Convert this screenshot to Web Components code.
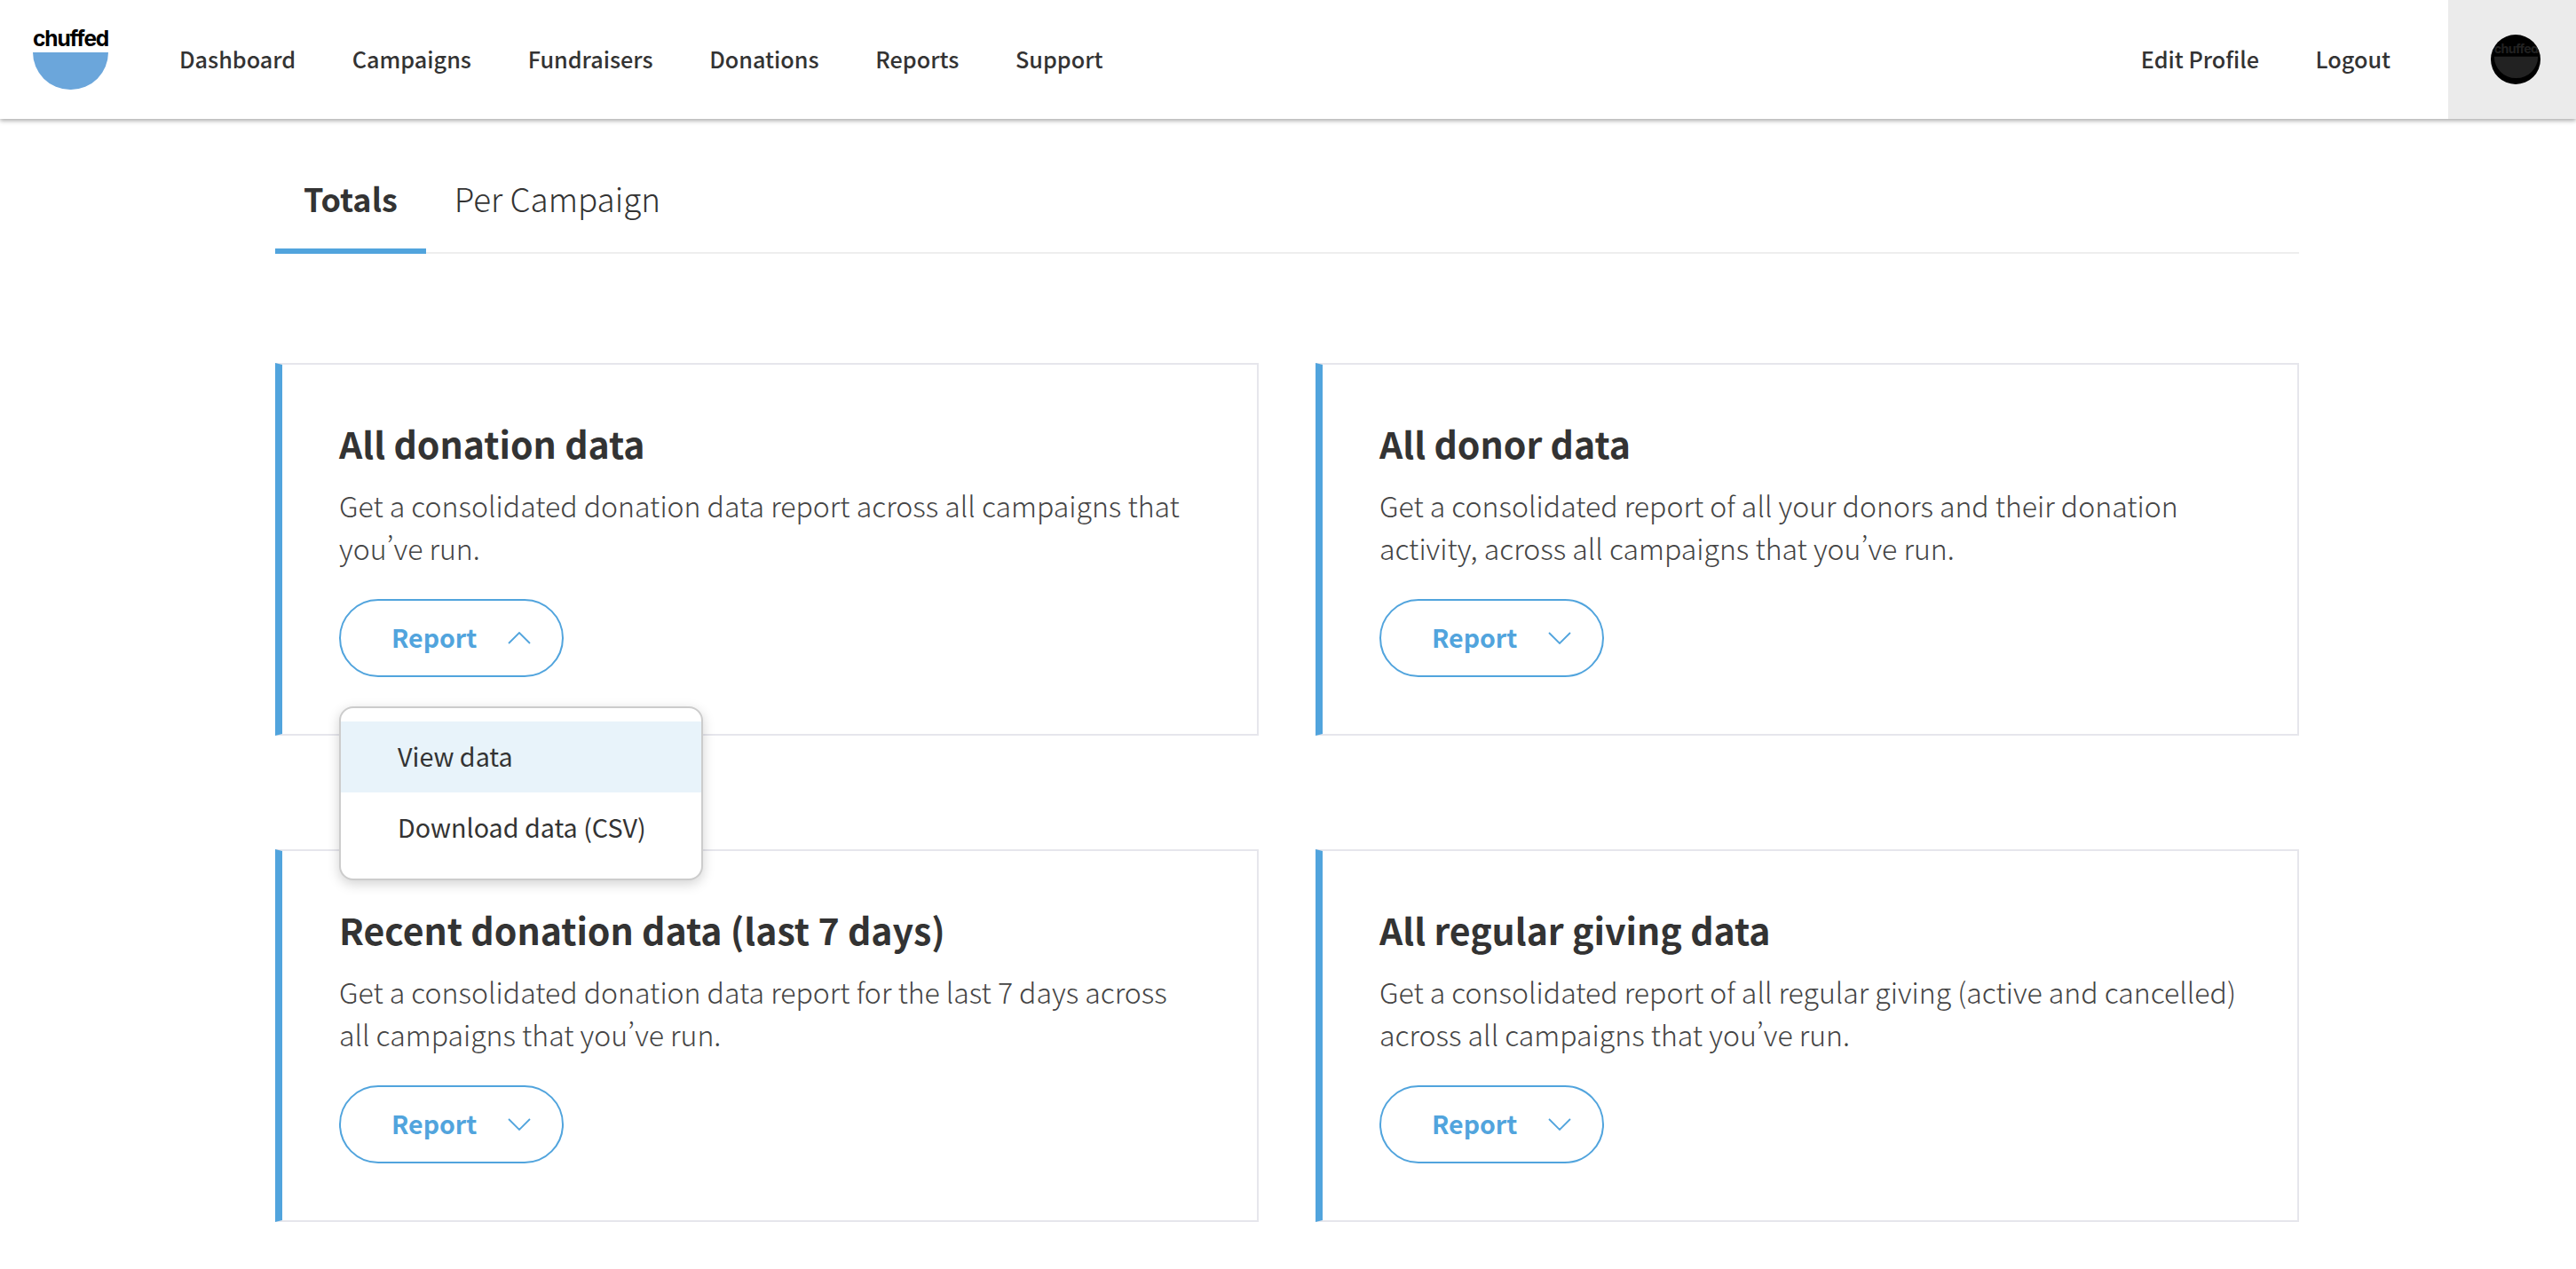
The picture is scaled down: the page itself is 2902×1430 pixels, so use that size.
<!DOCTYPE html>
<html lang="en">
<head>
<meta charset="utf-8">
<title>Reports</title>
<style>
    html, body {
        margin: 0;
        background: #fff;
        color: #333;
        font-family: "Noto Sans CJK SC", "Noto Sans", sans-serif;
    }
    app-main {
        display: block;
        padding: 0 312px 0 310px;
    }
</style>
</head>
<body>
<app-header></app-header>
<app-main>
    <report-tabs></report-tabs>
    <report-grid>
        <report-card heading="All donation data" open>Get a consolidated donation data report across all campaigns that you’ve run.</report-card>
        <report-card heading="All donor data">Get a consolidated report of all your donors and their donation activity, across all campaigns that you’ve run.</report-card>
        <report-card heading="Recent donation data (last 7 days)">Get a consolidated donation data report for the last 7 days across all campaigns that you’ve run.</report-card>
        <report-card heading="All regular giving data">Get a consolidated report of all regular giving (active and cancelled) across all campaigns that you’ve run.</report-card>
    </report-grid>
</app-main>

<template id="logo-tpl">
<style>
    :host { display: block; width: 85px; }
    .word {
        display: block;
        font: 700 24.5px/26px Inter, sans-serif;
        letter-spacing: -1.1px;
        color: var(--logo-text, #000);
        text-align: center;
        white-space: nowrap;
    }
    .bowl {
        display: block;
        height: 42px;
        margin-top: 3px;
        background: var(--logo-bowl, #6ba6db);
        border-radius: 0 0 42px 42px / 0 0 42px 42px;
    }
</style>
<span class="word">chuffed</span>
<span class="bowl"></span>
</template>

<template id="header-tpl">
<style>
    :host {
        display: flex;
        align-items: stretch;
        height: 134px;
        background: #fff;
        box-shadow: 0 2px 5px rgba(0,0,0,.35);
        font-size: 25.2px;
        position: relative;
    }
    .brand { padding: 30px 0 0 37px; width: 202px; box-sizing: border-box; }
    nav { display: flex; align-items: center; gap: 63.7px; padding-bottom: 3px; }
    nav.left { flex: 1; }
    nav.right { padding-right: 65px; }
    a { color: #333; text-decoration: none; font-weight: 500; }
    .avatar-box {
        width: 144px;
        box-sizing: border-box;
        padding-left: 48px;
        background: #ebebeb;
        display: flex;
        align-items: center;
    }
    .avatar {
        width: 56px;
        height: 56px;
        border-radius: 50%;
        background: #000;
        display: flex;
        align-items: center;
        justify-content: center;
        overflow: hidden;
        --logo-text: #222;
        --logo-bowl: #222;
    }
    .avatar chuffed-logo { transform: scale(.58); flex: none; }
</style>
<div class="brand"><chuffed-logo></chuffed-logo></div>
<nav class="left">
    <a href="#">Dashboard</a>
    <a href="#">Campaigns</a>
    <a href="#">Fundraisers</a>
    <a href="#">Donations</a>
    <a href="#">Reports</a>
    <a href="#">Support</a>
</nav>
<nav class="right">
    <a href="#">Edit Profile</a>
    <a href="#">Logout</a>
</nav>
<div class="avatar-box"><div class="avatar"><chuffed-logo></chuffed-logo></div></div>
</template>

<template id="tabs-tpl">
<style>
    :host {
        display: flex;
        height: 152px;
        margin-bottom: 123px;
        box-sizing: border-box;
        border-bottom: 2px solid #eee;
        font-size: 36.8px;
    }
    .tab {
        display: flex;
        align-items: center;
        padding: 26px 32px 0;
        color: #333;
        height: 152px;
        box-sizing: border-box;
        font-weight: 300;
    }
    .active {
        padding-top: 32px;
        font-size: 36px;
        font-weight: 700;
        border-bottom: 6px solid #51a4dd;
    }
</style>
<div class="tab active">Totals</div>
<div class="tab">Per Campaign</div>
</template>

<template id="grid-tpl">
<style>
    :host {
        display: grid;
        grid-template-columns: 1108px 1108px;
        column-gap: 64px;
        row-gap: 128px;
    }
</style>
<slot></slot>
</template>

<template id="card-tpl">
<style>
    :host {
        display: block;
        position: relative;
        box-sizing: border-box;
        height: 420px;
        padding: 60px 64px 0 64px;
        border: 2px solid #e6e6ec;
        border-left: 8px solid #51a4dd;
    }
    h2 {
        margin: 0;
        font-size: 41px;
        line-height: 56px;
        font-weight: 700;
        color: #333;
    }
    p {
        margin: 18px 0 0;
        font-size: 32px;
        line-height: 48px;
        font-weight: 300;
        color: #444;
        font-feature-settings: "pwid"; /* otherwise the apostrophe is full width */
    }
    report-button { margin-top: 34px; }
    report-menu { position: absolute; left: 64px; top: 385px; z-index: 5; }
</style>
<h2></h2>
<p><slot></slot></p>
<report-button></report-button>
</template>

<template id="button-tpl">
<style>
    :host {
        display: flex;
        align-items: center;
        box-sizing: border-box;
        width: 253px;
        height: 88px;
        padding-left: 57px;
        border: 2px solid #51a4dd;
        border-radius: 44px;
        color: #51a4dd;
        font-size: 28.5px;
        font-weight: 700;
    }
    span { padding-bottom: 3px; }
    svg { margin-left: 35px; }
</style>
<span>Report</span>
<svg width="26" height="14" viewBox="0 0 26 14" fill="none" stroke="#51a4dd" stroke-width="1.8"><path d="M1 1l12 12L25 1"/></svg>
</template>

<template id="menu-tpl">
<style>
    :host {
        display: block;
        box-sizing: border-box;
        width: 410px;
        height: 196px;
        padding: 15px 0;
        background: #fff;
        border: 2px solid #ccc;
        border-radius: 16px;
        box-shadow: 0 4px 14px rgba(0,0,0,.18);
        font-size: 28.7px;
        color: #333;
    }
    div { height: 80px; line-height: 77px; padding-left: 64px; }
    .hover { background: #e8f3fa; }
</style>
<div class="hover">View data</div>
<div>Download data (CSV)</div>
</template>

<script>
function shadowFrom(el, id) {
    var root = el.attachShadow({ mode: 'open' });
    root.appendChild(document.getElementById(id).content.cloneNode(true));
    return root;
}

customElements.define('chuffed-logo', class extends HTMLElement {
    constructor() { super(); shadowFrom(this, 'logo-tpl'); }
});
customElements.define('app-header', class extends HTMLElement {
    constructor() { super(); shadowFrom(this, 'header-tpl'); }
});
customElements.define('app-main', class extends HTMLElement {
    constructor() { super(); this.attachShadow({ mode: 'open' }).innerHTML = '<slot></slot>'; }
});
customElements.define('report-tabs', class extends HTMLElement {
    constructor() { super(); shadowFrom(this, 'tabs-tpl'); }
});
customElements.define('report-grid', class extends HTMLElement {
    constructor() { super(); shadowFrom(this, 'grid-tpl'); }
});
customElements.define('report-menu', class extends HTMLElement {
    constructor() { super(); shadowFrom(this, 'menu-tpl'); }
});
customElements.define('report-button', class extends HTMLElement {
    constructor() { super(); shadowFrom(this, 'button-tpl'); }
    static get observedAttributes() { return ['open']; }
    attributeChangedCallback(attr, oldValue, newValue) {
        this.shadowRoot.querySelector('svg').style.transform = newValue !== null ? 'rotate(180deg)' : '';
    }
});
customElements.define('report-card', class extends HTMLElement {
    constructor() {
        super();
        this.root = shadowFrom(this, 'card-tpl');
    }
    connectedCallback() {
        this.root.querySelector('h2').textContent = this.getAttribute('heading');
        if (this.hasAttribute('open')) {
            this.root.querySelector('report-button').setAttribute('open', '');
            this.root.appendChild(document.createElement('report-menu'));
        }
    }
});
</script>
</body>
</html>
